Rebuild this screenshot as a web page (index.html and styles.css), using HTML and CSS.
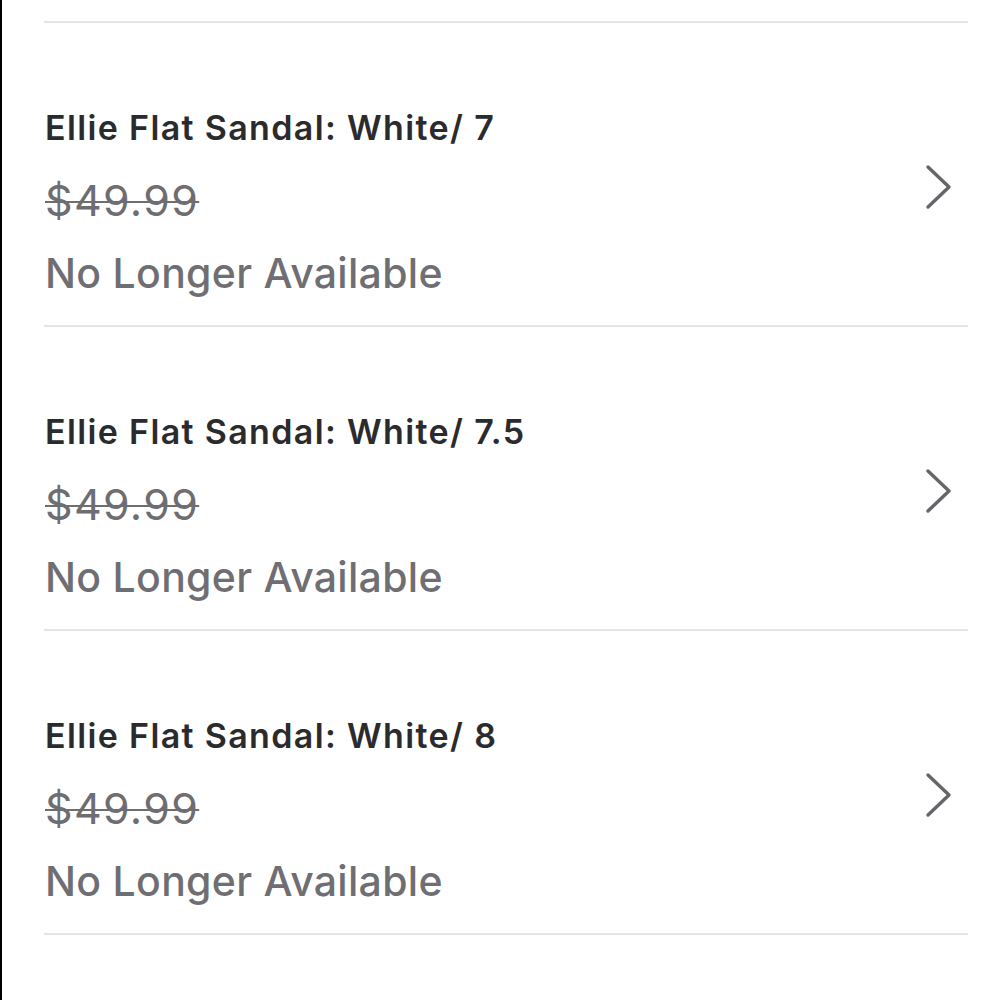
FILE: index.html
```html
<!DOCTYPE html>
<html lang="en">
<head>
    <meta charset="UTF-8">
    <meta name="viewport" content="width=device-width, initial-scale=1.0">
    <title>Order Items</title>
    <link rel="stylesheet" href="styles.css">
</head>
<body>
    <div class="item-list">
        <a href="#" class="item-row">
            <div class="item-info">
                <div class="item-name">Ellie Flat Sandal: White/ 7</div>
                <div class="item-price">$49.99</div>
                <div class="item-status">No Longer Available</div>
            </div>
            <svg class="chevron" width="28" height="46" viewBox="0 0 28 46">
                <polyline points="3,3 24,23 3,43" />
            </svg>
        </a>
        <a href="#" class="item-row">
            <div class="item-info">
                <div class="item-name">Ellie Flat Sandal: White/ 7.5</div>
                <div class="item-price">$49.99</div>
                <div class="item-status">No Longer Available</div>
            </div>
            <svg class="chevron" width="28" height="46" viewBox="0 0 28 46">
                <polyline points="3,3 24,23 3,43" />
            </svg>
        </a>
        <a href="#" class="item-row">
            <div class="item-info">
                <div class="item-name">Ellie Flat Sandal: White/ 8</div>
                <div class="item-price">$49.99</div>
                <div class="item-status">No Longer Available</div>
            </div>
            <svg class="chevron" width="28" height="46" viewBox="0 0 28 46">
                <polyline points="3,3 24,23 3,43" />
            </svg>
        </a>
    </div>
</body>
</html>
```

FILE: styles.css
```css
* {
    margin: 0;
    padding: 0;
    box-sizing: border-box;
    font-family: Inter, "Noto Sans", "Liberation Sans", sans-serif;
}

body {
    background-color: #fff;
    border-left: 2px solid #000;
    min-height: 100vh;
}

.item-list {
    margin: 21px 32px 0 42px;
    border-top: 2px solid #e5e5e5;
}

.item-row {
    display: flex;
    align-items: center;
    padding: 69px 15px 15px 1px;
    border-bottom: 2px solid #e5e5e5;
    text-decoration: none;
}

.item-info {
    flex: 1;
}

.item-name {
    font-size: 34px;
    font-weight: 600;
    letter-spacing: 1.35px;
    line-height: 72px;
    color: #2b2b2d;
}

.item-price {
    font-size: 43px;
    letter-spacing: 1.3px;
    line-height: 72px;
    color: #6d6d72;
    text-decoration: line-through;
    text-decoration-thickness: 2px;
}

.item-status {
    font-size: 41px;
    font-weight: 500;
    letter-spacing: 0.3px;
    line-height: 74px;
    color: #6e6e73;
}

.chevron {
    margin-bottom: 28px;
}

.chevron polyline {
    fill: none;
    stroke: #66666a;
    stroke-width: 3.4;
    stroke-linecap: round;
    stroke-linejoin: round;
}
```
